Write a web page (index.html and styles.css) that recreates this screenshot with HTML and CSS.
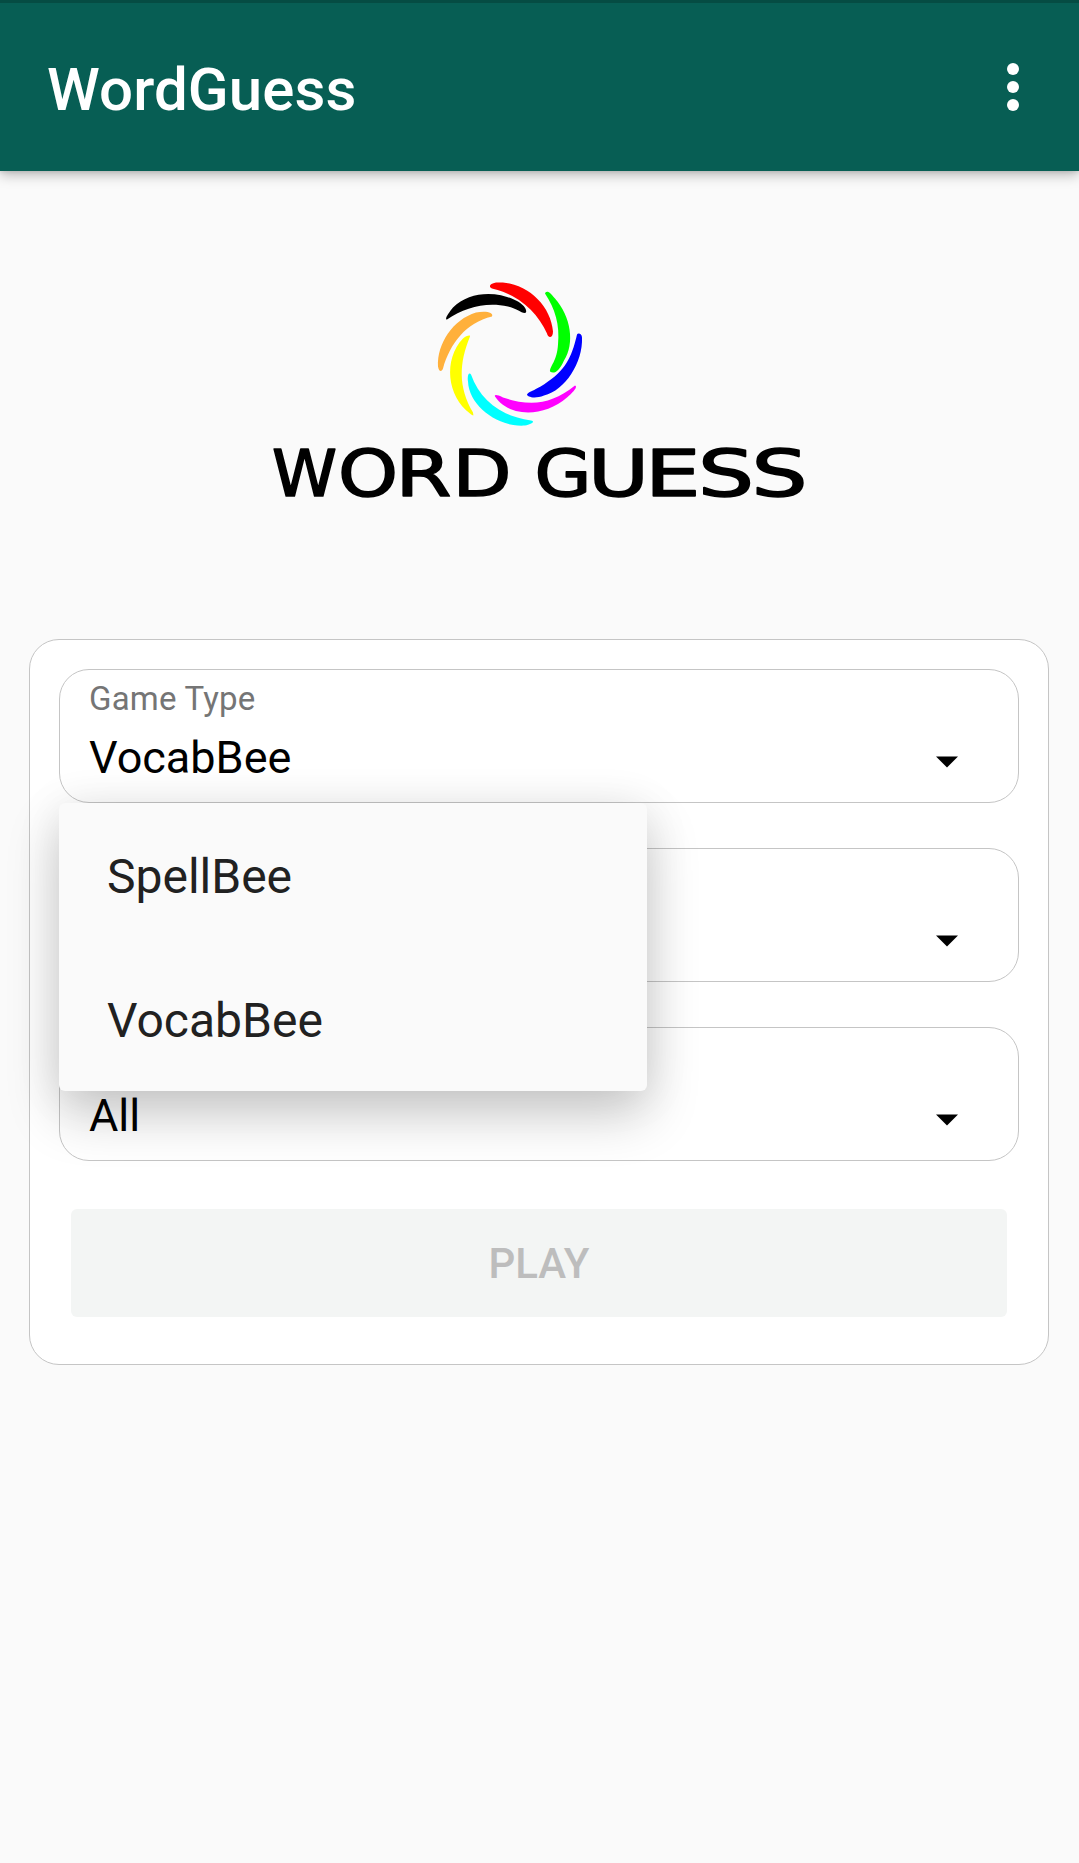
FILE: index.html
```html
<!DOCTYPE html>
<html lang="en">
<head>
<meta charset="utf-8">
<title>WordGuess</title>
<link rel="stylesheet" href="styles.css">
</head>
<body>
<header class="appbar">
  <h1 class="title">WordGuess</h1>
  <button class="more" aria-label="More options"><span class="dot"></span><span class="dot"></span><span class="dot"></span></button>
</header>
<main>
  <svg class="logo" width="533" height="230" viewBox="0 0 533 230">
    <g transform="translate(147 -0.5)">
      <path fill="#f00" d="M72 18C68 16 70 13 76 12C105 10 131 34 133 61C133 68 128 68 127 63C118 43 99 24 72 18Z"/>
      <path fill="#0f0" d="M125 23C126 20 129 20 135 28C151 46 155 73 144 90C139 101 134 104 130 101C130 95 137 91 138 74C140 54 135 38 125 23Z"/>
      <path fill="#00f" d="M157 64C158 62 162 63 162 67C163 92 145 120 124 125C114 129 107 126 107 124C108 121 118 119 128 111C148 98 153 81 157 64Z"/>
      <path fill="#f0f" d="M75 126C74 124 77 124 83 127C111 136 131 134 155 115C158 116 154 121 147 127C124 147 89 147 75 126Z"/>
      <path fill="#0ff" d="M51 104C49 101 47 105 48 111C49 136 79 157 105 155C111 154 116 151 111 150C82 146 60 130 51 104Z"/>
      <path fill="#ff0" d="M50 66C51 64 46 65 43 68C23 89 27 126 50 143C55 147 53 144 53 142C38 116 39 93 50 66Z"/>
      <path fill="#ffb03b" d="M72 46C74 42 66 40 56 42C33 49 17 73 18 96C19 102 22 101 23 98C30 73 46 52 72 46Z"/>
      <path fill="#000" d="M27 49C24 49 29 42 33 37C49 21 76 20 96 30C104 34 107 39 106 42C103 44 97 38 88 36C66 31 45 37 27 49Z"/>
    </g>
    <text class="wordmark" y="224.5"><tspan x="-1" textLength="65" lengthAdjust="spacingAndGlyphs">W</tspan><tspan x="65" textLength="60" lengthAdjust="spacingAndGlyphs">O</tspan><tspan x="122.5" textLength="56" lengthAdjust="spacingAndGlyphs">R</tspan><tspan x="179.5" textLength="59" lengthAdjust="spacingAndGlyphs">D</tspan> <tspan x="261.5" textLength="57" lengthAdjust="spacingAndGlyphs">G</tspan><tspan x="315" textLength="61" lengthAdjust="spacingAndGlyphs">U</tspan><tspan x="372" textLength="55.5" lengthAdjust="spacingAndGlyphs">E</tspan><tspan x="425" textLength="56" lengthAdjust="spacingAndGlyphs">S</tspan><tspan x="478.5" textLength="56" lengthAdjust="spacingAndGlyphs">S</tspan></text>
  </svg>
  <section class="card">
    <div class="field">
      <label class="label">Game Type</label>
      <div class="value">VocabBee</div>
      <svg class="arrow" width="24" height="12" viewBox="0 0 24 12"><path d="M1 0.5H23L12 11.5Z"/></svg>
      <ul class="menu"><li>SpellBee</li><li>VocabBee</li></ul>
    </div>
    <div class="field">
      <svg class="arrow" width="24" height="12" viewBox="0 0 24 12"><path d="M1 0.5H23L12 11.5Z"/></svg>
    </div>
    <div class="field">
      <div class="value">All</div>
      <svg class="arrow" width="24" height="12" viewBox="0 0 24 12"><path d="M1 0.5H23L12 11.5Z"/></svg>
    </div>
    <button class="play" disabled>PLAY</button>
  </section>
</main>
</body>
</html>
```
FILE: styles.css
```css
* { box-sizing: border-box; }
body { margin: 0; min-height: 1863px; background: #fafafa; font-family: Roboto, sans-serif; }
.appbar {
  height: 171px; padding: 0 47px; border-top: 3px solid #054c43;
  display: flex; align-items: center; justify-content: space-between;
  background: #075e54; color: #fff;
  box-shadow: 0 4px 12px rgba(0,0,0,.26), 0 1px 4px rgba(0,0,0,.1);
}
.title { margin: 0; font-size: 60px; line-height: 70px; font-weight: 500; padding-top: 5px; letter-spacing: .1px; }
.more {
  display: flex; flex-direction: column; gap: 6px; padding: 0; margin-right: 13px;
  border: 0; background: none;
}
.dot { width: 12px; height: 12px; border-radius: 50%; background: #fff; }
main { display: flex; flex-direction: column; align-items: center; padding-top: 100px; }
.logo { display: block; margin: 0 1px 0 0; overflow: visible; filter: blur(.7px); }
.wordmark { font-family: "DejaVu Sans", sans-serif; font-size: 64px; stroke: #000; stroke-width: 1.6px; stroke-linejoin: round; }
.card {
  width: 1020px; height: 726px; margin: 138px 1px 0 0; padding: 29px;
  display: flex; flex-direction: column; gap: 45px;
  background: #fff; border: 1px solid #c5c5c5; border-radius: 30px;
}
.field {
  position: relative; height: 134px; padding: 9px 59px 0 29px;
  display: grid; grid-template-columns: 1fr 24px; grid-template-rows: 40px 76px;
  border: 1px solid #c5c5c5; border-radius: 30px;
}
.label { grid-column: 1; grid-row: 1; font-size: 33px; line-height: 40px; letter-spacing: .2px; color: #757575; }
.value { grid-column: 1; grid-row: 2; font-size: 45px; line-height: 78px; color: #000; }
.arrow { grid-column: 2; grid-row: 2; margin-top: 37px; }
.menu {
  position: absolute; z-index: 2; left: -1px; top: 133px; width: 588px; margin: 0; padding: 0;
  list-style: none; background: #fafafa; border-radius: 6px;
  box-shadow: 0 24px 54px rgba(0,0,0,.2), 0 4px 48px rgba(0,0,0,.08);
}
.menu li { height: 144px; padding-left: 48px; font-size: 48px; line-height: 148px; color: #212121; }
.play {
  height: 108px; margin: 3px 12px 0; padding: 2px 0 0; border: 0; border-radius: 6px;
  background: #f3f5f4; color: #bdbdbd; font: 500 42px/106px Roboto, sans-serif;
}
```
